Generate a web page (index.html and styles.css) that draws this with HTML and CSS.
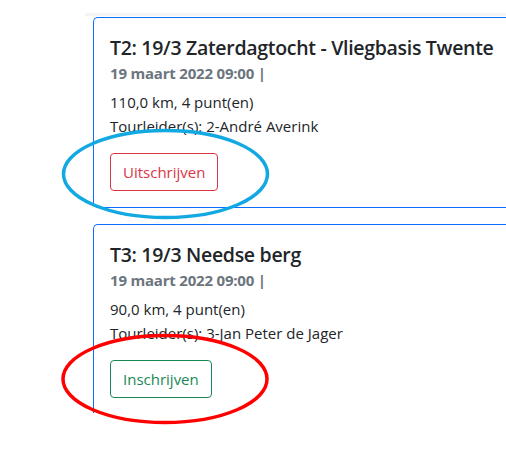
FILE: index.html
```html
<!DOCTYPE html>
<html lang="nl">
<head>
<meta charset="utf-8">
<title>Tochten</title>
<link rel="stylesheet" href="styles.css">
</head>
<body>
<div class="col">
  <div class="band"></div>
  <div class="cards">
    <div class="card">
      <h5 class="card-title">T2: 19/3 Zaterdagtocht - Vliegbasis Twente</h5>
      <h6 class="card-subtitle">19 maart 2022 09:00 |</h6>
      <p class="card-text">110,0 km, 4 punt(en)<br>Tourleider(s): 2-André Averink</p>
      <button class="btn btn-danger-outline">Uitschrijven</button>
    </div>
    <div class="card card-open">
      <h5 class="card-title">T3: 19/3 Needse berg</h5>
      <h6 class="card-subtitle">19 maart 2022 09:00 |</h6>
      <p class="card-text">90,0 km, 4 punt(en)<br>Tourleider(s): 3-Jan Peter de Jager</p>
      <button class="btn btn-success-outline">Inschrijven</button>
    </div>
  </div>
</div>
<svg class="annot" width="506" height="470" viewBox="0 0 506 470">
  <ellipse cx="165.5" cy="174" rx="102" ry="43.5" fill="none" stroke="#12a9e3" stroke-width="3.5"/>
  <ellipse cx="165" cy="379" rx="102" ry="43.5" fill="none" stroke="#ff0000" stroke-width="3.5"/>
</svg>
</body>
</html>
```
FILE: styles.css
```css
html, body {
  margin: 0;
  padding: 0;
  background: #fff;
}
body {
  width: 506px;
  height: 470px;
  overflow: hidden;
  position: relative;
  font-family: "Open Sans", "Noto Sans", sans-serif;
  color: #212529;
}
.col {
  margin-left: 85px;
  padding-top: 13px;
}
.band {
  height: 3px;
  background: #f4f4f4;
}
.cards {
  padding: 1px 0 0 8px;
}
.card {
  width: 440px;
  border: 1px solid #0d6efd;
  border-right: none;
  border-radius: 5px 0 0 5px;
  padding: 18px 16px 16px;
  margin-bottom: 16px;
  white-space: nowrap;
}
.card-open {
  border-bottom: none;
  border-radius: 5px 0 0 0;
  padding-bottom: 15px;
}
.card-title {
  font-size: 19.5px;
  font-weight: 600;
  line-height: 24px;
  margin: 0 0 8px;
  letter-spacing: -0.3px;
}
.card-subtitle {
  font-size: 15px;
  font-weight: 700;
  line-height: 19px;
  color: #6c757d;
  margin: -4px 0 8px;
  letter-spacing: -0.2px;
}
.card-text {
  font-size: 15px;
  line-height: 23.5px;
  margin: 0 0 15px;
}
.btn {
  display: inline-block;
  font-family: inherit;
  font-size: 15px;
  line-height: 24px;
  padding: 6px 12px;
  background: #fff;
  border-radius: 4px;
  border: 1px solid;
}
.btn-danger-outline {
  color: #dc3545;
  border-color: #dc3545;
}
.btn-success-outline {
  color: #198754;
  border-color: #198754;
}
.annot {
  position: absolute;
  left: 0;
  top: 0;
  pointer-events: none;
}
```
